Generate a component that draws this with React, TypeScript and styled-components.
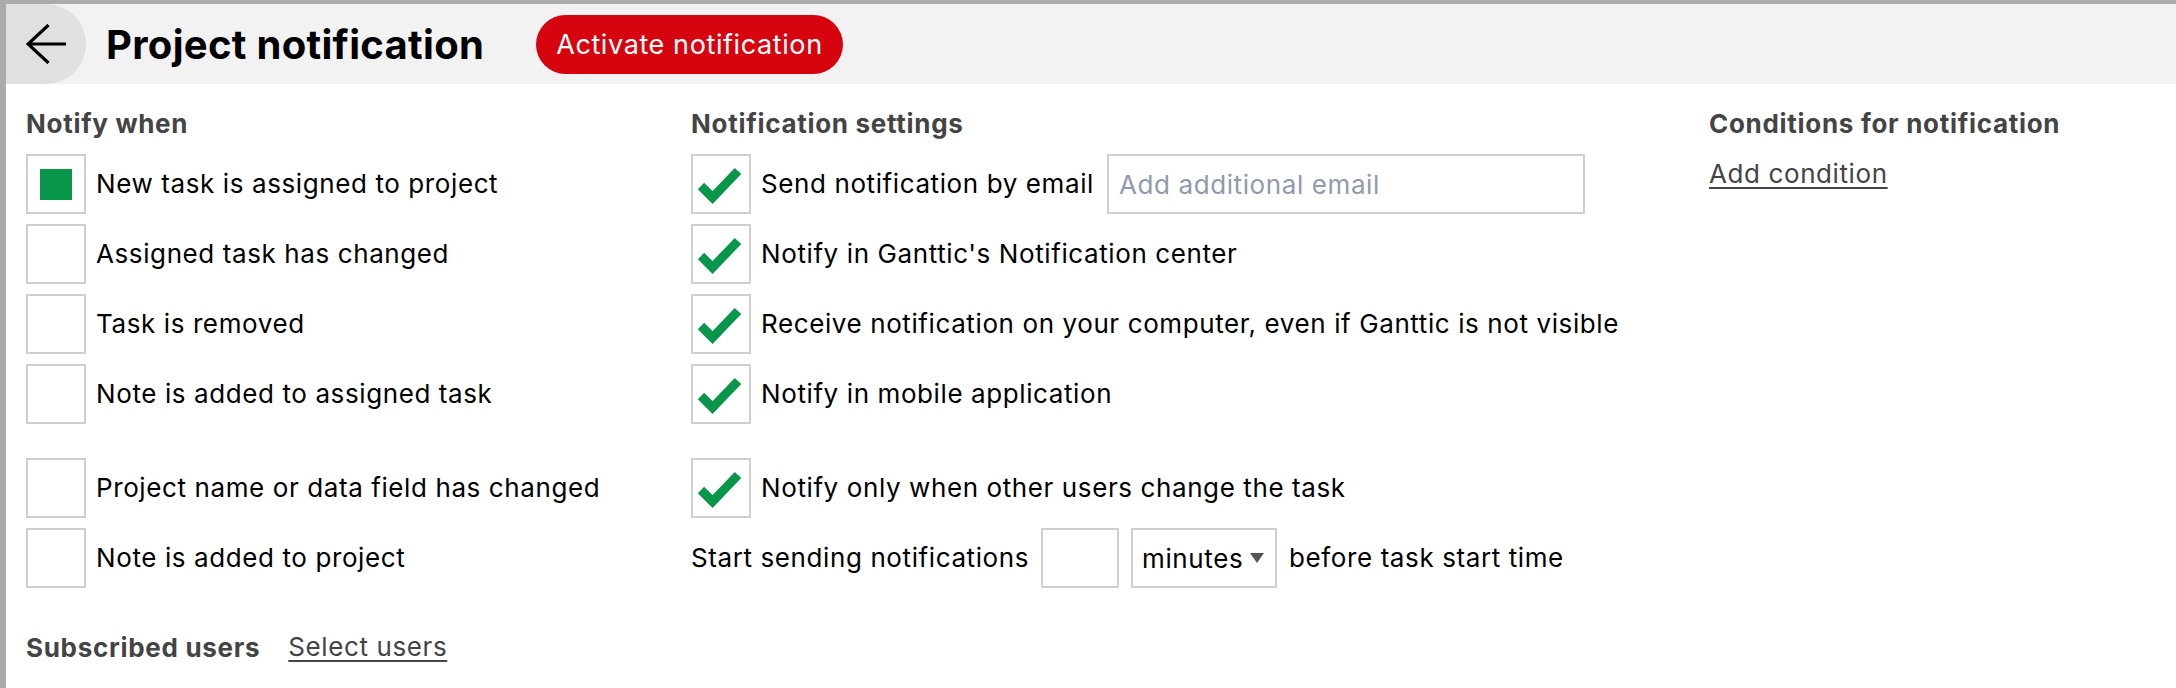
import React from 'react'
import styled, { createGlobalStyle } from 'styled-components'

const GlobalStyle = createGlobalStyle`
  html, body {
    margin: 0;
    padding: 0;
    background: #ffffff;
  }
  body {
    font-family: Inter, 'Noto Sans', Arial, sans-serif;
    color: #000;
  }
  * {
    box-sizing: border-box;
  }
`

const Frame = styled.div`
  min-height: 688px;
  border-top: 4px solid #ababab;
  border-left: 6px solid #ababab;
  background: #fff;
`

const Header = styled.div`
  height: 80px;
  display: flex;
  align-items: center;
  background: #f2f2f2;
`

const BackButton = styled.button`
  width: 80px;
  height: 80px;
  border: none;
  padding: 0;
  display: flex;
  align-items: center;
  justify-content: center;
  background: #e0e0e0;
  border-radius: 0 40px 40px 0;
  cursor: pointer;
`

const Title = styled.h1`
  margin: 0 0 0 20px;
  font-size: 40px;
  font-weight: 700;
  letter-spacing: 0.3px;
  color: #000;
`

const ActivateButton = styled.button`
  margin-left: 52px;
  height: 59px;
  padding: 0 20px;
  border: none;
  border-radius: 30px;
  background: #d6040f;
  color: #fff;
  font-family: inherit;
  font-size: 27px;
  font-weight: 400;
  letter-spacing: 0.6px;
  cursor: pointer;
`

const Content = styled.div`
  padding: 20px 0 0 20px;
`

const Columns = styled.div`
  display: grid;
  grid-template-columns: 665px 1018px 1fr;
`

const Column = styled.div`
  display: flex;
  flex-direction: column;
`

const Heading = styled.div`
  height: 40px;
  line-height: 40px;
  font-size: 26px;
  font-weight: 700;
  letter-spacing: 0.7px;
  color: #444;
`

const OptionRow = styled.div<{ $spaced?: boolean }>`
  display: flex;
  align-items: center;
  gap: 10px;
  height: 60px;
  margin-top: ${(p) => (p.$spaced ? '34px' : '10px')};
`

const CheckBox = styled.div`
  width: 60px;
  height: 60px;
  flex: none;
  border: 2px solid #cfcfcf;
  background: #fff;
  display: flex;
  align-items: center;
  justify-content: center;
`

const FilledMark = styled.div`
  width: 32px;
  height: 31px;
  background: #07964a;
`

const Label = styled.span`
  font-size: 26px;
  line-height: 40px;
  letter-spacing: 0.6px;
  color: #000;
  white-space: nowrap;
`

const EmailInput = styled.input`
  margin-left: 3px;
  width: 478px;
  height: 60px;
  border: 2px solid #cfcfcf;
  padding: 0 10px;
  font-family: inherit;
  font-size: 26px;
  letter-spacing: 0.6px;
  color: #000;
  outline: none;
  &::placeholder {
    color: #8f9aab;
  }
`

const InlineRow = styled.div`
  display: flex;
  align-items: center;
  gap: 12px;
  height: 60px;
  margin-top: 10px;
`

const NumberBox = styled.input`
  width: 78px;
  height: 60px;
  border: 2px solid #cfcfcf;
  padding: 0 8px;
  font-family: inherit;
  font-size: 26px;
  outline: none;
`

const SelectBox = styled.div`
  width: 146px;
  height: 60px;
  border: 2px solid #cfcfcf;
  background: #fff;
  display: flex;
  align-items: center;
  justify-content: space-between;
  padding: 0 11px 0 9px;
  font-size: 26px;
  letter-spacing: 0.6px;
`

const Caret = styled.span`
  width: 0;
  height: 0;
  border-left: 7px solid transparent;
  border-right: 7px solid transparent;
  border-top: 10px solid #555;
`

const LinkText = styled.a`
  font-size: 26px;
  line-height: 40px;
  letter-spacing: 0.6px;
  color: #444;
  text-decoration: underline;
  text-underline-offset: 4px;
  text-decoration-thickness: 2px;
  cursor: pointer;
  white-space: nowrap;
`

const ConditionLink = styled(LinkText)`
  margin-top: 10px;
  align-self: flex-start;
`

const SubscribedRow = styled.div`
  display: flex;
  align-items: center;
  gap: 28px;
  height: 40px;
  margin-top: 39px;
`

const InlineHeading = styled.span`
  font-size: 26px;
  font-weight: 700;
  letter-spacing: 0.7px;
  color: #444;
`

const BackArrow = () => (
  <svg width="40" height="40" viewBox="0 0 40 40" fill="none">
    <path
      d="M22.5 1 L2 20 L22.5 39 M2 20 H40"
      stroke="#000"
      strokeWidth="3.2"
      strokeLinecap="butt"
      strokeLinejoin="miter"
    />
  </svg>
)

const CheckIcon = () => (
  <svg width="56" height="56" viewBox="0 0 56 56" fill="none">
    <polyline points="8,30 19.5,41.5 45,15" stroke="#07964a" strokeWidth="9" strokeLinecap="butt" />
  </svg>
)

type Option = { label: string; checked?: boolean; spaced?: boolean }

const notifyWhen: Option[] = [
  { label: 'New task is assigned to project', checked: true },
  { label: 'Assigned task has changed' },
  { label: 'Task is removed' },
  { label: 'Note is added to assigned task' },
  { label: 'Project name or data field has changed', spaced: true },
  { label: 'Note is added to project' },
]

const settings: Option[] = [
  { label: "Notify in Ganttic's Notification center" },
  { label: 'Receive notification on your computer, even if Ganttic is not visible' },
  { label: 'Notify in mobile application' },
  { label: 'Notify only when other users change the task', spaced: true },
]

export default function App() {
  return (
    <>
      <GlobalStyle />
      <Frame>
        <Header>
          <BackButton aria-label="Back">
            <BackArrow />
          </BackButton>
          <Title>Project notification</Title>
          <ActivateButton>Activate notification</ActivateButton>
        </Header>
        <Content>
          <Columns>
            <Column>
              <Heading>Notify when</Heading>
              {notifyWhen.map((o) => (
                <OptionRow key={o.label} $spaced={o.spaced}>
                  <CheckBox>{o.checked && <FilledMark />}</CheckBox>
                  <Label>{o.label}</Label>
                </OptionRow>
              ))}
            </Column>
            <Column>
              <Heading>Notification settings</Heading>
              <OptionRow>
                <CheckBox>
                  <CheckIcon />
                </CheckBox>
                <Label>Send notification by email</Label>
                <EmailInput placeholder="Add additional email" />
              </OptionRow>
              {settings.map((o) => (
                <OptionRow key={o.label} $spaced={o.spaced}>
                  <CheckBox>
                    <CheckIcon />
                  </CheckBox>
                  <Label>{o.label}</Label>
                </OptionRow>
              ))}
              <InlineRow>
                <Label>Start sending notifications</Label>
                <NumberBox />
                <SelectBox>
                  <span>minutes</span>
                  <Caret />
                </SelectBox>
                <Label>before task start time</Label>
              </InlineRow>
            </Column>
            <Column>
              <Heading>Conditions for notification</Heading>
              <ConditionLink>Add condition</ConditionLink>
            </Column>
          </Columns>
          <SubscribedRow>
            <InlineHeading>Subscribed users</InlineHeading>
            <LinkText>Select users</LinkText>
          </SubscribedRow>
        </Content>
      </Frame>
    </>
  )
}
